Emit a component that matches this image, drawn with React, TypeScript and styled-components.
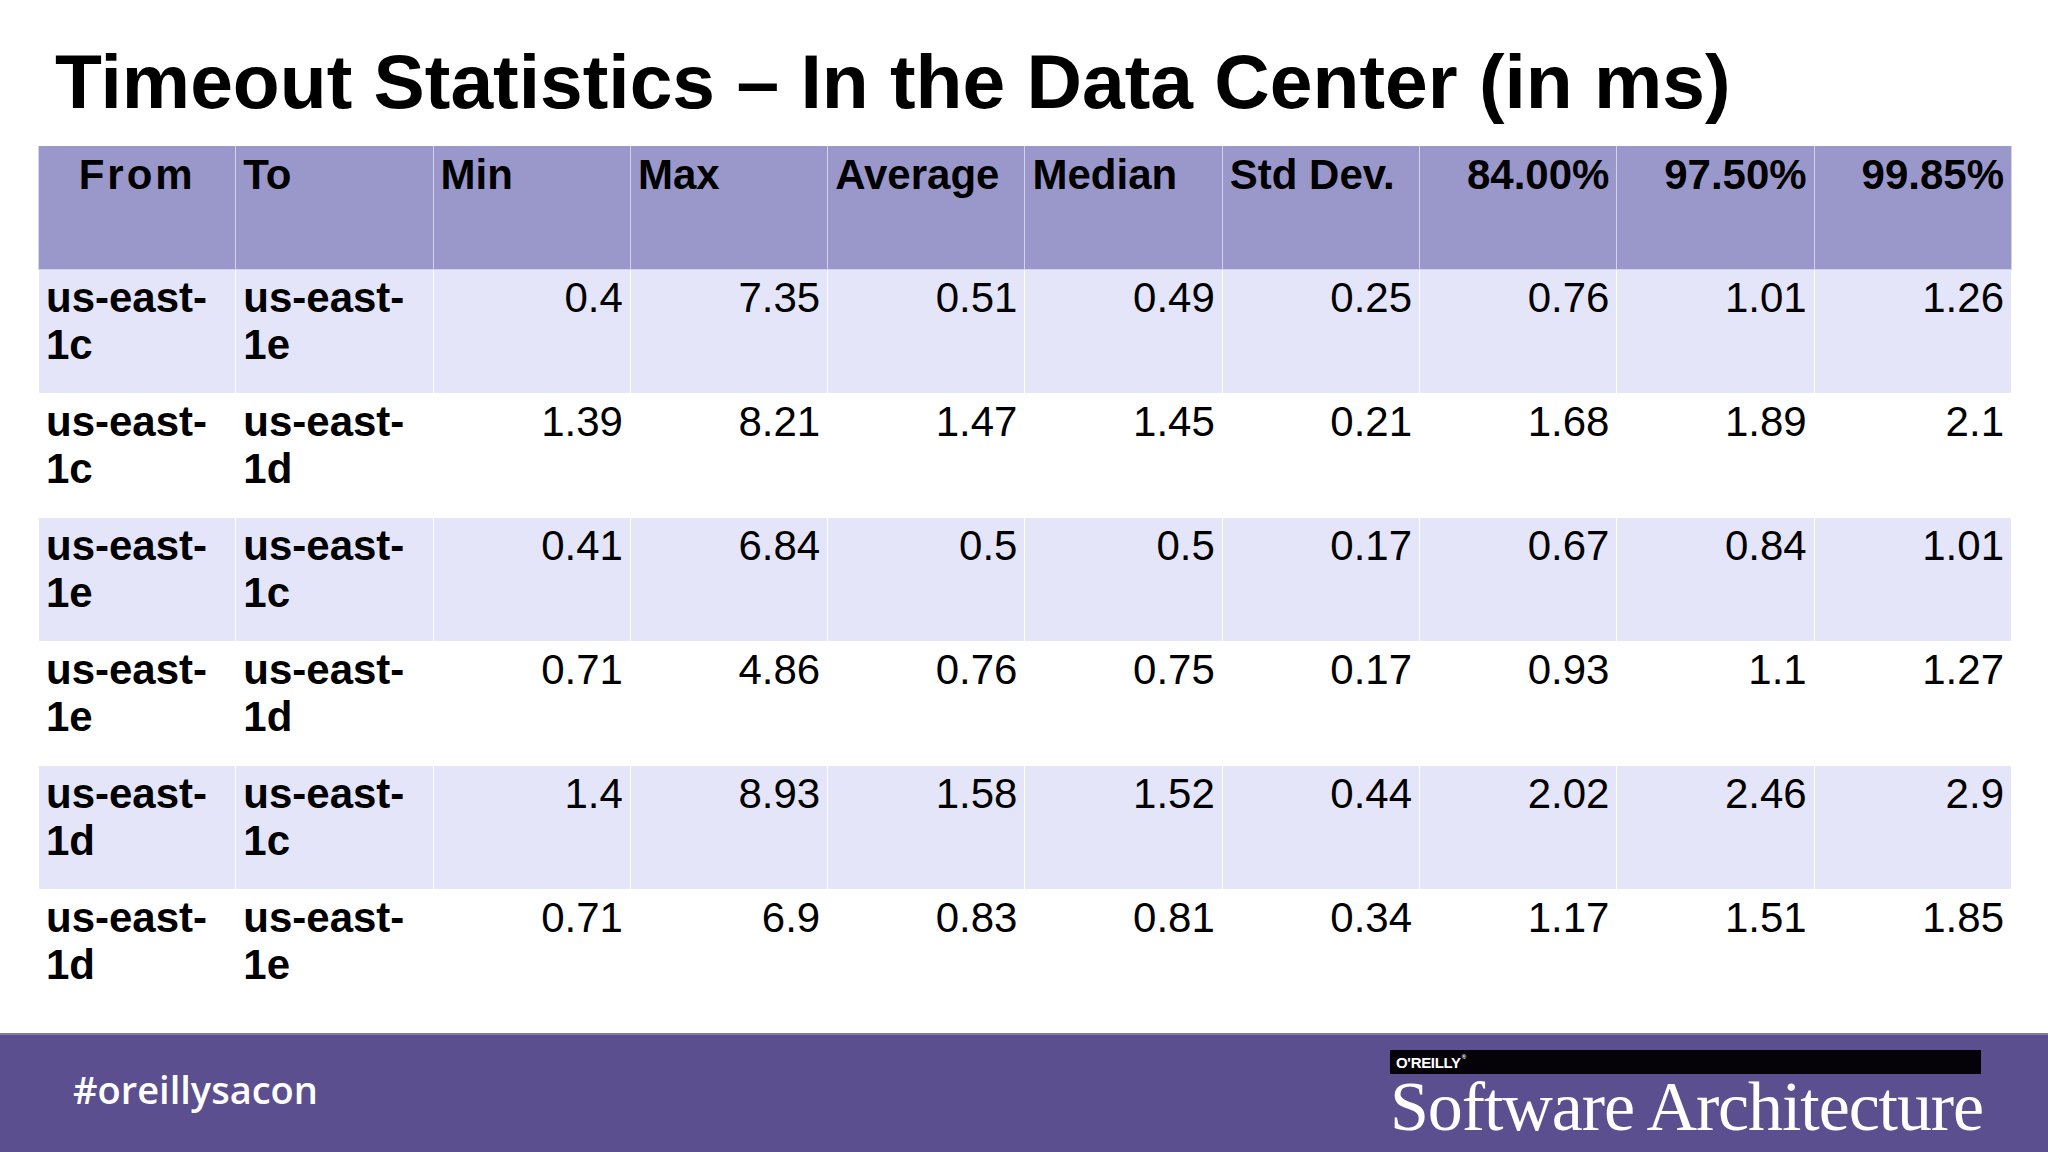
import React from "react";
import styled, { createGlobalStyle } from "styled-components";

type Row = { from: string; to: string; values: string[] };

const headers = ["Min", "Max", "Average", "Median", "Std Dev."];
const percentiles = ["84.00%", "97.50%", "99.85%"];

const rows: Row[] = [
  { from: "us-east-1c", to: "us-east-1e", values: ["0.4", "7.35", "0.51", "0.49", "0.25", "0.76", "1.01", "1.26"] },
  { from: "us-east-1c", to: "us-east-1d", values: ["1.39", "8.21", "1.47", "1.45", "0.21", "1.68", "1.89", "2.1"] },
  { from: "us-east-1e", to: "us-east-1c", values: ["0.41", "6.84", "0.5", "0.5", "0.17", "0.67", "0.84", "1.01"] },
  { from: "us-east-1e", to: "us-east-1d", values: ["0.71", "4.86", "0.76", "0.75", "0.17", "0.93", "1.1", "1.27"] },
  { from: "us-east-1d", to: "us-east-1c", values: ["1.4", "8.93", "1.58", "1.52", "0.44", "2.02", "2.46", "2.9"] },
  { from: "us-east-1d", to: "us-east-1e", values: ["0.71", "6.9", "0.83", "0.81", "0.34", "1.17", "1.51", "1.85"] },
];

export default function App() {
  return (
    <>
      <GlobalStyle />
      <Slide>
        <Main>
          <Title>Timeout Statistics – In the Data Center (in ms)</Title>
          <Table>
            <colgroup>
              {Array.from({ length: 10 }).map((_, i) => (
                <col key={i} />
              ))}
            </colgroup>
            <thead>
              <HeadRow>
                <HeadCell $align="center" $spaced>
                  From
                </HeadCell>
                <HeadCell>To</HeadCell>
                {headers.map((h) => (
                  <HeadCell key={h}>{h}</HeadCell>
                ))}
                {percentiles.map((p) => (
                  <HeadCell key={p} $align="right">
                    {p}
                  </HeadCell>
                ))}
              </HeadRow>
            </thead>
            <tbody>
              {rows.map((r, i) => (
                <BodyRow key={i} $shaded={i % 2 === 0}>
                  <NameCell>{r.from}</NameCell>
                  <NameCell>{r.to}</NameCell>
                  {r.values.map((v, j) => (
                    <NumCell key={j}>{v}</NumCell>
                  ))}
                </BodyRow>
              ))}
            </tbody>
          </Table>
        </Main>
        <Footer>
          <Hashtag>#oreillysacon</Hashtag>
          <Logo>
            <LogoBar>
              O'REILLY<sup>®</sup>
            </LogoBar>
            <LogoTitle>Software Architecture</LogoTitle>
          </Logo>
        </Footer>
      </Slide>
    </>
  );
}

const GlobalStyle = createGlobalStyle`
  html, body {
    margin: 0;
    padding: 0;
    background: #ffffff;
  }
  body {
    font-family: "Liberation Sans", Arial, sans-serif;
  }
`;

const Slide = styled.div`
  width: 2048px;
  height: 1152px;
  display: flex;
  flex-direction: column;
  overflow: hidden;
  background: #ffffff;
`;

const Main = styled.main`
  flex: 1;
  padding: 38px 0 0 38px;
`;

const Title = styled.h1`
  margin: 0 0 22px 17px;
  font-family: "Liberation Sans", Arial, sans-serif;
  font-weight: 700;
  font-size: 76.8px;
  line-height: 86px;
  color: #000;
`;

const Table = styled.table`
  width: 1974px;
  table-layout: fixed;
  border-collapse: collapse;
  font-family: "Liberation Sans", Arial, sans-serif;
  font-size: 42px;
  line-height: 47px;
  color: #000;

  col {
    width: 10%;
  }
`;

const HeadRow = styled.tr`
  height: 123px;
  background: #9a98cb;
`;

const HeadCell = styled.th<{ $align?: "left" | "center" | "right"; $spaced?: boolean }>`
  padding: 5px 7px 0;
  vertical-align: top;
  text-align: ${({ $align }) => $align ?? "left"};
  font-weight: 700;
  letter-spacing: ${({ $spaced }) => ($spaced ? "3px" : "normal")};
  border: 1px solid #d4d3ee;
  border-top: none;
`;

const BodyRow = styled.tr<{ $shaded: boolean }>`
  height: 124px;
  background: ${({ $shaded }) => ($shaded ? "#e5e5fa" : "#ffffff")};

  td {
    border: 1px solid #ffffff;
  }
`;

const NameCell = styled.td`
  padding: 4px 7px 0;
  vertical-align: top;
  font-weight: 700;
  text-align: left;
`;

const NumCell = styled.td`
  padding: 4px 7px 0;
  vertical-align: top;
  font-weight: 400;
  text-align: right;
`;

const Footer = styled.footer`
  height: 117px;
  border-top: 2px solid #857c9e;
  background: #5b4f8f;
  display: flex;
  justify-content: space-between;
  align-items: flex-start;
  padding: 0 67px 0 73px;
`;

const Hashtag = styled.div`
  margin-top: 35px;
  font-family: "Open Sans", "Noto Sans", sans-serif;
  font-weight: 600;
  font-size: 38px;
  line-height: 38px;
  color: #ffffff;
`;

const Logo = styled.div`
  margin-top: 15px;
  width: 591px;
  display: flex;
  flex-direction: column;
`;

const LogoBar = styled.div`
  height: 24px;
  box-sizing: border-box;
  padding: 1px 0 0 6px;
  background: #050307;
  color: #ffffff;
  font-family: "Liberation Sans", Arial, sans-serif;
  font-weight: 700;
  font-size: 15px;
  line-height: 23px;
  letter-spacing: -0.3px;

  sup {
    font-size: 6px;
    vertical-align: top;
    line-height: 12px;
    margin-left: 1px;
  }
`;

const LogoTitle = styled.div`
  margin-top: -2px;
  font-family: "Liberation Serif", "Times New Roman", serif;
  font-weight: 400;
  font-size: 70px;
  line-height: 70px;
  letter-spacing: -1.1px;
  color: #ffffff;
  white-space: nowrap;
`;
